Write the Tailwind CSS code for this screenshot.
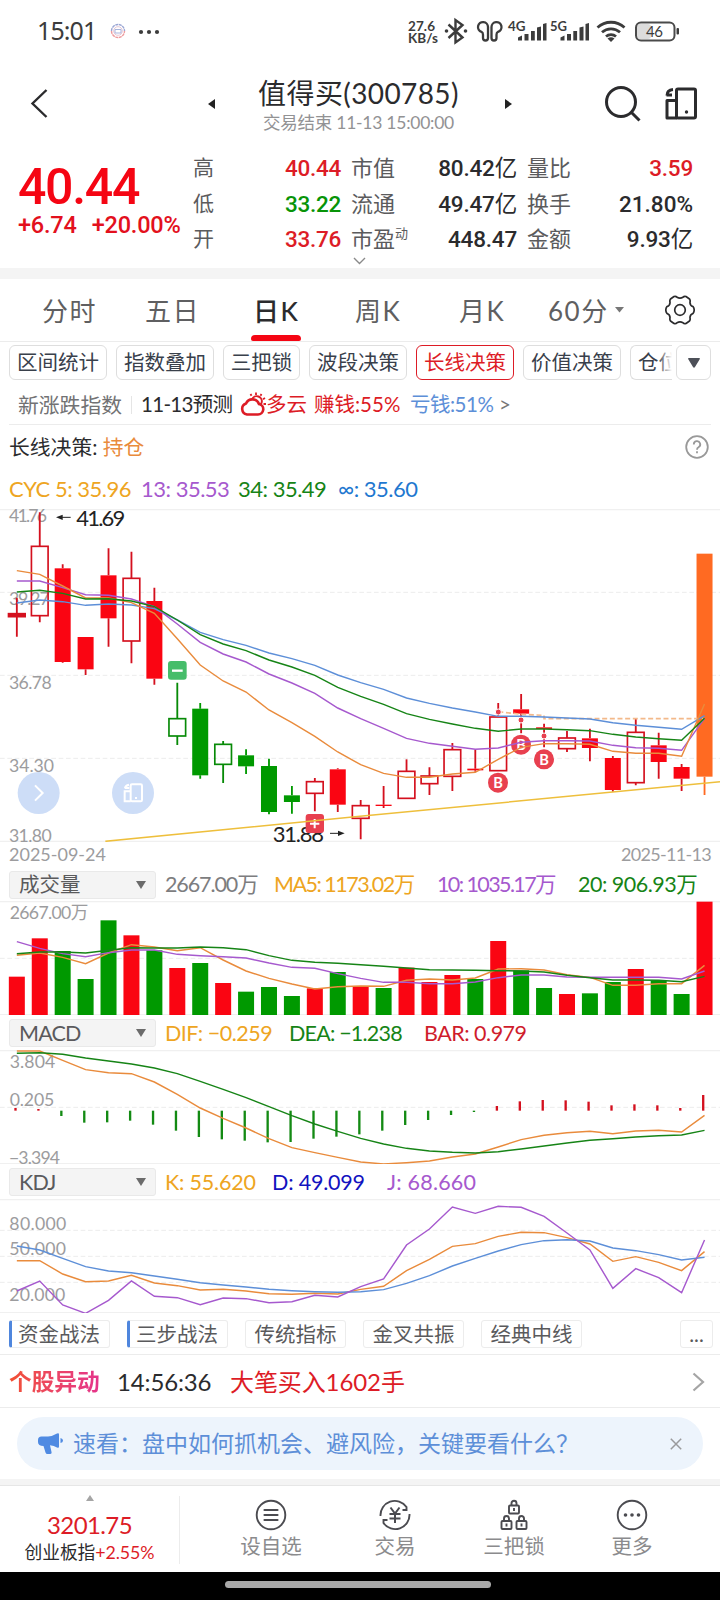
<!DOCTYPE html>
<html lang="zh-CN">
<head>
    <meta charset="UTF-8">
    <meta name="viewport" content="width=device-width, initial-scale=1.0">
    <title>值得买(300785)</title>
    <script src="https://cdn.jsdelivr.net/npm/@tailwindcss/browser@4"></script>
    <style>
        body { font-family: Lato, "Noto Sans CJK SC", sans-serif; font-weight: 400; }
        .num { font-family: Roboto, "Noto Sans CJK SC", sans-serif; }
    </style>
</head>
<body class="w-[720px] h-[1600px] overflow-hidden bg-white text-[#2b2b2d] whitespace-nowrap">

    <!-- Status bar -->
    <div class="flex items-center h-[62px] pl-[37px]">
        <span class="text-[25px] text-[#3c3c3c] tracking-[-0.900px] w-[73px] font-['Noto_Sans']">15:01</span>
        <svg class="w-4 h-4" viewBox="0 0 16 16" fill="none" stroke-width="1.4">
            <path d="M1.5 8a6.500 6.500 0 0 1 13 0" stroke="#9aa5d3" stroke-dasharray="3 .6"/>
            <path d="M1.500 8a6.500 6.500 0 0 0 13 0" stroke="#ee9a9d" stroke-dasharray="3 .6"/>
            <circle cx="8" cy="8" r="4.300" stroke="#e6c5d3" stroke-width="1"/>
            <path d="M5 6.500h6v3.500H5z" stroke="#a7b4dd" stroke-width="1"/>
        </svg>
        <svg class="ml-[12px] mt-[2px] w-[22px] h-[6px]" viewBox="0 0 22 6" fill="#3c3c3c">
            <circle cx="3" cy="3" r="2.100"/><circle cx="11" cy="3" r="2.100"/><circle cx="19" cy="3" r="2.100"/>
        </svg>
        <svg class="ml-[240px] w-[290px] h-[62px]" viewBox="400 0 290 62" fill="#3c3c3c">
            <g font-weight="700" font-family="Lato">
                <text x="408" y="30.500" font-size="13.500" textLength="27">27.6</text>
                <text x="408" y="42.500" font-size="13.500" textLength="30">KB/s</text>
                <text x="508" y="30.500" font-size="13.500" textLength="17.500" lengthAdjust="spacingAndGlyphs">4G</text>
                <text x="550" y="30.500" font-size="13.500" textLength="17" lengthAdjust="spacingAndGlyphs">5G</text>
            </g>
            <path d="M448.500 24.500l14 13-7 5V20l7 5-14 13" fill="none" stroke="#3c3c3c" stroke-width="2.400"/>
            <circle cx="446.500" cy="31" r="1.800"/><circle cx="465.500" cy="31" r="1.800"/>
            <g fill="none" stroke="#3c3c3c" stroke-width="2.300">
                <path d="M488 38V27a5 5 0 1 0-6.500 4.800c1.500.6 1.500 1.700 1.500 3V38a2.500 2.500 0 0 0 5 0z"/>
                <path d="M491.500 38V27a5 5 0 1 1 6.500 4.800c-1.500.6-1.500 1.700-1.500 3V38a2.500 2.500 0 0 1-5 0z"/>
            </g>
            <path d="M518 37.500l4-2v5h-4zM524.500 34h4v6.500h-4zM531 31h3.800v9.500H531zM537 27.500l4-1v14h-4zM543 24l3.500-1v17.500H543z"/>
            <path d="M560.500 37.500l4-2v5h-4zM567 34h4v6.500h-4zM573.300 31h3.800v9.500h-3.800zM579.500 27.500l4-1v14h-4zM585.500 24l3.500-1v17.500h-3.500z"/>
            <g fill="none" stroke="#3c3c3c" stroke-width="2.800">
                <path d="M597.500 27.500a20 20 0 0 1 27 0M602 32.300a13.500 13.500 0 0 1 18 0M606 36.500a7.600 7.600 0 0 1 10 0"/>
            </g>
            <path d="M607.500 38.500q3.500-2.500 7 0l-3.500 3.500z"/>
            <rect x="637" y="24" width="14" height="15" rx="3" fill="#dcdcdc"/>
            <rect x="636" y="22.500" width="38.500" height="18" rx="5" fill="none" stroke="#4a4a4a" stroke-width="2"/>
            <rect x="676.500" y="28" width="2.500" height="6.500" rx="1"/>
            <text x="646" y="37" font-size="15" textLength="17" font-family="Lato">46</text>
        </svg>
    </div>

    <!-- Title -->
    <header class="flex items-center h-[88px]">
        <svg class="ml-[30px] -mt-[6px] w-[20px] h-[32px]" viewBox="0 0 20 32" fill="none" stroke="#2b2b2d" stroke-width="2.400"><path d="M16.500 3L2.500 16.500 16.500 30"/></svg>
        <svg class="ml-[157px] -mt-[5px] w-[8px] h-[10px]" viewBox="0 0 8 10" fill="#222"><path d="M8 0v10L1 5z"/></svg>
        <div class="ml-[28px] w-[231px] -mt-[3px] flex flex-col items-center">
            <div class="text-[28px] leading-[36px] tracking-[0.400px]">值得买(300785)</div>
            <div class="text-[17.500px] leading-[24px] tracking-[-0.250px] text-[#929294]">交易结束 11-13 15:00:00</div>
        </div>
        <svg class="ml-[31px] -mt-[5px] w-[8px] h-[10px]" viewBox="0 0 8 10" fill="#222"><path d="M0 0v10l7-5z"/></svg>
        <svg class="ml-[91px] -mt-[5px] w-[38px] h-[38px]" viewBox="0 0 38 38" fill="none" stroke="#2b2b2d" stroke-width="3"><circle cx="17" cy="17" r="14.500"/><path d="M27 27l8.500 8.500"/></svg>
        <svg class="ml-[22px] -mt-[6px] w-[34px] h-[34px]" viewBox="0 0 34 34" fill="none" stroke="#2b2b2d" stroke-width="3" stroke-linejoin="round">
            <rect x="12.500" y="3" width="19" height="29" rx="1.500"/><path d="M12 14.500H3V32h10M2.500 9h5.500M3 9.500q0-5.500 6-6"/><circle cx="22.500" cy="26" r="1.700" fill="#2b2b2d" stroke="none"/>
        </svg>
    </header>

    <!-- Quote -->
    <section class="num flex h-[118px] pt-[1px] border-b-[11px] border-[#f4f4f4] box-content -mt-px">
        <div class="w-[193px] pl-[18px] pt-[10px] text-[#e3101d]">
            <div class="text-[50px] font-medium leading-[54px] tracking-[-1.300px] text-[#f50513]">40.44</div>
            <div class="flex gap-[15px] text-[23.500px] font-medium leading-[22px] tracking-[-0.200px]"><span>+6.74</span><span>+20.00%</span></div>
        </div>
        <div class="w-[148px] pt-px text-[22.500px] leading-[35.500px]">
            <div class="flex justify-between"><span class="text-[#5b5b5d] text-[21px]">高</span><span class="font-medium tracking-[-0.300px] text-[#dd1c26]">40.44</span></div>
            <div class="flex justify-between"><span class="text-[#5b5b5d] text-[21px]">低</span><span class="font-medium tracking-[-0.300px] text-[#089408]">33.22</span></div>
            <div class="flex justify-between"><span class="text-[#5b5b5d] text-[21px]">开</span><span class="font-medium tracking-[-0.300px] text-[#dd1c26]">33.76</span></div>
        </div>
        <div class="ml-[10px] w-[166px] pt-px text-[22.500px] leading-[35.500px]">
            <div class="flex justify-between"><span class="text-[#5b5b5d] text-[22px]">市值</span><span class="tracking-[-0.200px]"><span class="font-medium">80.42</span>亿</span></div>
            <div class="flex justify-between"><span class="text-[#5b5b5d] text-[22px]">流通</span><span class="tracking-[-0.200px]"><span class="font-medium">49.47</span>亿</span></div>
            <div class="flex justify-between"><span class="text-[#5b5b5d] text-[22px]">市盈<sup class="text-[13px] -top-[9px]">动</sup></span><span class="font-medium tracking-[-0.200px]">448.47</span></div>
            <svg class="-mt-[1px] ml-[2px] w-[13px] h-[8px]" viewBox="0 0 13 8" fill="none" stroke="#8a8a8a" stroke-width="1.400"><path d="M1 1l5.500 5.500L12 1"/></svg>
        </div>
        <div class="ml-[10px] w-[166px] pt-px text-[22.500px] leading-[35.500px]">
            <div class="flex justify-between"><span class="text-[#5b5b5d] text-[22px]">量比</span><span class="font-medium tracking-[-0.200px] text-[#dd1c26]">3.59</span></div>
            <div class="flex justify-between"><span class="text-[#5b5b5d] text-[22px]">换手</span><span class="font-medium">21.80%</span></div>
            <div class="flex justify-between"><span class="text-[#5b5b5d] text-[22px]">金额</span><span class="tracking-[-0.200px]"><span class="font-medium">9.93</span>亿</span></div>
        </div>
    </section>

    <!-- Period tabs -->
    <nav class="flex h-[63px] pl-[42px] text-[26px] leading-[64px] tracking-[1.500px] text-[#5f5f61] border-b border-[#ececec]">
        <span class="w-[103px]">分时</span>
        <span class="w-[106px]">五日</span>
        <span class="relative w-[104px] pl-[2px] font-medium text-[#2b2b2d]">日K<i class="absolute left-0 bottom-0 w-[50px] h-[6px] rounded-t-[4px] rounded-b-[2px] bg-[#f50513]"></i></span>
        <span class="w-[104px]">周K</span>
        <span class="w-[89px]">月K</span>
        <span class="w-[67px]">60分</span>
        <svg class="mt-[28px] w-[9px] h-[6px]" viewBox="0 0 9 6" fill="#777"><path d="M0 0h9L4.500 5.500z"/></svg>
        <svg class="ml-[41px] mt-[16px] w-[30px] h-[30px]" viewBox="0 0 30 30" fill="none" stroke="#2b2b2d" stroke-width="1.700" stroke-linejoin="round">
            <path d="M9 1.500Q11 1 12 2.300 15 4 18 2.300 19 1 21 1.500L24.500 4Q25.500 5.500 25 7 24.800 10.500 28 11.500 29.200 13 29.200 15 29.200 17 28 18.500 24.800 19.500 25 23 25.500 24.500 24.500 26L21 28.500Q19 29 18 27.700 15 26 12 27.700 11 29 9 28.500L5.500 26Q4.500 24.500 5 23 5.200 19.500 2 18.500.8 17 .8 15 .8 13 2 11.500 5.200 10.500 5 7 4.500 5.500 5.500 4z"/>
            <circle cx="15" cy="15" r="5.300"/>
        </svg>
    </nav>

    <!-- Strategy chips -->
    <div class="flex h-[43px] pt-[3px] pl-[9px] text-[20.500px] text-[#39404b] leading-[33px] text-center">
        <span class="w-[98px] h-[35px] mr-[9px] border border-[#dedede] rounded-[6px]">区间统计</span>
        <span class="w-[98px] h-[35px] mr-[9px] border border-[#dedede] rounded-[6px]">指数叠加</span>
        <span class="w-[77px] h-[35px] mr-[9px] border border-[#dedede] rounded-[6px]">三把锁</span>
        <span class="w-[98px] h-[35px] mr-[9px] border border-[#dedede] rounded-[6px]">波段决策</span>
        <span class="w-[98px] h-[35px] mr-[9px] border-[1.500px] border-[#dd1c26] rounded-[6px] text-[#dd1c26]">长线决策</span>
        <span class="w-[98px] h-[35px] mr-[9px] border border-[#dedede] rounded-[6px]">价值决策</span>
        <span class="relative w-[42px] h-[35px] mr-[4px] pl-[7px] border border-r-0 border-[#dedede] rounded-l-[6px] overflow-hidden text-left">仓位<i class="absolute right-0 -top-px w-[14px] h-[35px] bg-linear-to-r from-white/0 to-white"></i></span>
        <span class="flex items-center justify-center w-[35px] h-[35px] border border-[#dedede] rounded-[6px]">
            <svg class="w-[12px] h-[10px]" viewBox="0 0 12 10" fill="#4d5058"><path d="M1 0h10q1.500 0 .7 1.300L7 9q-1 1.500-2 0L.3 1.300Q-.5 0 1 0z"/></svg>
        </span>
    </div>

    <!-- Sentiment forecast -->
    <div class="flex items-center mx-[9px] h-[40px] pl-[9px] text-[20.500px] border-b border-[#ececec]">
        <span class="w-[113px] text-[20.800px] text-[#727274]">新涨跌指数</span>
        <i class="w-px h-[18px] bg-[#e5e5e5]"></i>
        <span class="ml-[9px] w-[99px] tracking-[-0.700px]">11-13预测</span>
        <svg class="-mt-[2px] w-[26px] h-[24px]" viewBox="0 0 26 24" fill="none" stroke="#dd1c26" stroke-width="2.600">
            <path d="M7 22.500h11a5.300 5.300 0 0 0 1-10.500 7 7 0 0 0-13-.5A5.700 5.700 0 0 0 7 22.500z"/>
            <path d="M12 7.500a5 5 0 0 1 9.500 3.500l-1.500 2" stroke-width="2"/>
            <path d="M16 .5V3M10.500 2l1 1.800M21.500 2l-1 1.800M25 6l-2 1.200M26 12h-2.500" stroke-width="1.800"/>
        </svg>
        <span class="w-[48px] text-[#dd1c26]">多云</span>
        <span class="w-[96px] text-[#dd1c26]">赚钱:55%</span>
        <span class="w-[89px] tracking-[-0.500px] text-[#5d8fd8]">亏钱:51%</span>
        <span class="text-[#777]">&gt;</span>
    </div>

    <div class="flex items-center justify-between h-[42px] pt-px pl-[9px] pr-[11px] text-[20.800px]">
        <span>长线决策: <span class="text-[#e98b3c]">持仓</span></span>
        <svg class="w-[24px] h-[24px]" viewBox="0 0 24 24" fill="none" stroke="#999" stroke-width="1.800"><circle cx="12" cy="12" r="10.800"/><path d="M8.800 9.500a3.200 3.200 0 1 1 4.700 2.700q-1.500.8-1.500 2.500M12 16.300v2"/></svg>
    </div>

    <div class="flex items-center h-[42px] pl-[9px] text-[22px] tracking-[-0.500px]">
        <span class="w-[132px] text-[#eea522]">CYC 5: 35.96</span>
        <span class="w-[97px] text-[#a659ce]">13: 35.53</span>
        <span class="w-[100px] text-[#168416]">34: 35.49</span>
        <span class="text-[#1f78d0]">∞: 35.60</span>
    </div>

    <!-- K line -->
    <svg id="kline" class="block w-[720px] h-[333px]" viewBox="0 27 2160 999" font-family="Lato"></svg>
    <div class="flex justify-between h-[26px] px-[9px] text-[18px] leading-[25px] text-[#9c9c9e]"><span>2025-09-24</span><span class="tracking-[-0.700px]">2025-11-13</span></div>

    <!-- Volume -->
    <div class="flex items-center h-[33px] pl-[9px] text-[21.500px] tracking-[-0.500px]">
        <div class="flex items-center justify-between w-[147px] h-[28px] mr-[9px] pl-[9px] pr-[9px] rounded-[3px] border border-[#e9e9e9] bg-[#f4f4f4] text-[20.500px] tracking-normal text-[#5a5a5c]">成交量<svg class="w-[10px] h-[8px]" viewBox="0 0 10 8" fill="#6b6b6b"><path d="M0 0h10L5 8z"/></svg></div>
        <span class="w-[109px] tracking-[-1.100px] text-[#7d7d7f]">2667.00万</span>
        <span class="w-[163px] tracking-[-1.500px] text-[#eea522]">MA5: 1173.02万</span>
        <span class="w-[141px] tracking-[-1.600px] text-[#a659ce]">10: 1035.17万</span>
        <span class="text-[#168416]">20: 906.93万</span>
    </div>
    <svg id="volume" class="block w-[720px] h-[114px]" viewBox="0 123 2160 342" font-family="Lato, Noto Sans CJK SC"></svg>

    <!-- MACD -->
    <div class="flex items-center h-[35px] pt-px pl-[9px] text-[21.500px] tracking-[-0.500px]">
        <div class="flex items-center justify-between w-[147px] h-[28px] mr-[9px] pl-[9px] pr-[9px] rounded-[3px] border border-[#e9e9e9] bg-[#f4f4f4] text-[21.500px] tracking-[-0.800px] text-[#5a5a5c]">MACD<svg class="w-[10px] h-[8px]" viewBox="0 0 10 8" fill="#6b6b6b"><path d="M0 0h10L5 8z"/></svg></div>
        <span class="w-[124px] text-[#eea522]">DIF: −0.259</span>
        <span class="w-[135px] tracking-[-0.800px] text-[#168416]">DEA: −1.238</span>
        <span class="text-[#cf1c2c]">BAR: 0.979</span>
    </div>
    <svg id="macd" class="block w-[720px] h-[114px]" viewBox="0 570 2160 342" font-family="Lato"></svg>

    <!-- KDJ -->
    <div class="flex items-center h-[35px] pt-px pl-[9px] text-[21.500px] tracking-[-0.200px]">
        <div class="flex items-center justify-between w-[147px] h-[28px] mr-[9px] pl-[9px] pr-[9px] rounded-[3px] border border-[#e9e9e9] bg-[#f4f4f4] text-[21.500px] tracking-[-0.800px] text-[#5a5a5c]">KDJ<svg class="w-[10px] h-[8px]" viewBox="0 0 10 8" fill="#6b6b6b"><path d="M0 0h10L5 8z"/></svg></div>
        <span class="w-[107px] text-[#eea522]">K: 55.620</span>
        <span class="w-[115px] text-[#1212c0]">D: 49.099</span>
        <span class="tracking-[0.200px] text-[#a659ce]">J: 68.660</span>
    </div>
    <svg id="kdj" class="block w-[720px] h-[114px]" viewBox="0 87 2160 342" font-family="Lato"></svg>

    <!-- Tactics -->
    <div class="flex items-center gap-[17px] h-[42px] pt-px pl-[9px] pr-[7px] text-[20.500px] leading-[26px] text-center text-[#5a5a5c] border-b border-[#ececec]">
        <span class="w-[101px] h-[28px] pr-[3px] border border-[#ececec] border-l-[3px] border-l-[#4f86dd] rounded-[3px]">资金战法</span>
        <span class="w-[101px] h-[28px] pr-[3px] border border-[#ececec] border-l-[3px] border-l-[#4f86dd] rounded-[3px]">三步战法</span>
        <span class="w-[101px] h-[28px] border border-[#ececec] rounded-[3px]">传统指标</span>
        <span class="w-[101px] h-[28px] border border-[#ececec] rounded-[3px]">金叉共振</span>
        <span class="w-[101px] h-[28px] border border-[#ececec] rounded-[3px]">经典中线</span>
        <span class="ml-auto w-[33px] h-[28px] border border-[#ececec] rounded-[3px]">...</span>
    </div>

    <!-- Unusual move -->
    <div class="flex items-center h-[53px] pt-[2px] pl-[9px] pr-[15px] text-[24px] border-b border-[#ececec]">
        <span class="w-[108px] text-[22.700px] font-bold"><span class="bg-linear-to-r from-[#f2502f] to-[#e5338a] bg-clip-text text-transparent">个股异动</span></span>
        <span class="w-[113px] tracking-[-0.150px]">14:56:36</span>
        <span class="text-[24px] tracking-[-0.100px] text-[#dd1c26]">大笔买入1602手</span>
        <svg class="ml-auto w-[13px] h-[20px]" viewBox="0 0 13 20" fill="none" stroke="#a5a5a5" stroke-width="2.200"><path d="M1.500 1.500L11 10l-9.500 8.500"/></svg>
    </div>

    <!-- Tip banner -->
    <div class="h-[77px] px-[17px] pt-[9px] border-b-[6px] border-[#f4f4f4]">
        <div class="flex items-center h-[53px] pl-[20px] pr-[21px] rounded-full bg-[#edf4fc] text-[23px] text-[#5d8fd8]">
            <svg class="w-[26px] h-[21px]" viewBox="0 0 26 21" fill="#4f8ae2"><path d="M1 7q0-3.500 3.500-3.500H11Q16 3 20 .5q2-1 2 1v12q0 2-2 1-3-2-7-2.200L14.500 19q.5 2-1.500 2h-2.500q-1.500 0-2-1.500l-2-6.500Q1 13 1 9zM23.500 5q2.500.5 2.500 2.500T23.500 10z"/></svg>
            <span class="ml-[10px]">速看：盘中如何抓机会、避风险，关键要看什么？</span>
            <svg class="ml-auto w-[12px] h-[12px]" viewBox="0 0 12 12" fill="none" stroke="#9a9a9c" stroke-width="1.500"><path d="M.8.8l10.400 10.400M11.200.8L.8 11.200"/></svg>
        </div>
    </div>

    <!-- Bottom bar -->
    <footer class="flex items-center h-[87px] pt-px border-t border-[#e6e6e6] text-[20.500px] text-[#8b8b8d]">
        <div class="flex flex-col items-center w-[180px] h-[68px] border-r border-[#ececec]">
            <svg class="-mt-[1px] w-[8px] h-[6px]" viewBox="0 0 8 6" fill="#a5a5a5"><path d="M4 0l4 6H0z"/></svg>
            <div class="mt-[9px] text-[24px] leading-[30px] tracking-[-0.600px] text-[#dd1c26]">3201.75</div>
            <div class="mt-[1px] text-[17.800px] leading-[22px] tracking-[-0.100px] text-[#2b2b2d]">创业板指<span class="text-[#dd1c26]">+2.55%</span></div>
        </div>
        <div class="flex flex-col items-center ml-[31px] w-[120px]">
            <svg class="w-[32px] h-[32px]" viewBox="0 0 32 32" fill="none" stroke="#4b4b50" stroke-width="1.900"><circle cx="16" cy="16" r="14.300"/><path d="M9.500 11h13M9.500 16h13M9.500 21h13" stroke-width="2.200" stroke-linecap="round"/></svg>
            <span class="leading-[30px]">设自选</span>
        </div>
        <div class="flex flex-col items-center ml-[4px] w-[120px]">
            <svg class="w-[32px] h-[32px]" viewBox="0 0 32 32" fill="none" stroke="#4b4b50" stroke-width="1.900"><path d="M1.500 17A14.300 14.300 0 0 1 27.500 8v3h-4M30.500 15A14.300 14.300 0 0 1 4.500 24v-3h4"/><path d="M11.500 8.500l4.500 6 4.500-6M10.500 15h11M10.500 19.500h11M16 15v9" stroke-width="2"/></svg>
            <span class="leading-[30px]">交易</span>
        </div>
        <div class="flex flex-col items-center -ml-[1px] w-[120px]">
            <svg class="w-[32px] h-[32px]" viewBox="0 0 32 32" fill="none" stroke="#4b4b50" stroke-width="1.900"><rect x="11" y="6.500" width="10" height="8" rx="1"/><path d="M13.500 6.500V4.300a2.500 2.500 0 0 1 5 0v2.200M16 9v3"/><rect x="3.500" y="22" width="10" height="8" rx="1"/><path d="M6 22v-2.500a2.500 2.500 0 0 1 5 0V22M8.500 24.500v3"/><rect x="18.500" y="22" width="10" height="8" rx="1"/><path d="M21 22v-2.500a2.500 2.500 0 0 1 5 0V22M23.500 24.500v3"/></svg>
            <span class="leading-[30px]">三把锁</span>
        </div>
        <div class="flex flex-col items-center -ml-[2px] w-[120px]">
            <svg class="w-[32px] h-[32px]" viewBox="0 0 32 32" fill="none" stroke="#4b4b50" stroke-width="1.900"><circle cx="16" cy="16" r="14.300"/><g fill="#4b4b50" stroke="none"><circle cx="9.500" cy="16" r="1.800"/><circle cx="16" cy="16" r="1.800"/><circle cx="22.500" cy="16" r="1.800"/></g></svg>
            <span class="leading-[30px]">更多</span>
        </div>
    </footer>
    <div class="h-[28px] pt-[9px] bg-black"><div class="mx-auto w-[266px] h-[7px] -translate-x-[2px] rounded-full bg-[#a8a8a8]"></div></div>

    <script>
        const RED = "#fa0512", LINE_RED = "#d4101e", GREEN = "#009900", ORANGE = "#e98b3c", PURPLE = "#a659ce", DARK_GREEN = "#168416", BLUE = "#5d8fd8";
        const x = i => 50.5 + 68.77 * i;

        const rule = y => `<path d="M0 ${y}H2160" stroke="#f0f0f0" stroke-width="4"/>`;
        const dashes = y => `<path d="M0 ${y}H2160" stroke="#ececec" stroke-width="3" stroke-dasharray="14 8"/>`;
        const line = (ys, color) => `<polyline fill="none" stroke="${color}" stroke-width="4.300" points="${ys.map((y, i) => x(i) + "," + y).join(" ")}"/>`;
        const label = (t, y, w, left = 27) => `<text x="${left}" y="${y}" font-size="53" fill="#9c9c9e" textLength="${w}">${t}</text>`;

        // [high, body top, body bottom, low, kind]: r/g filled, R/G hollow, o = latest
        const candles = [
            [293,341,350,410,"R"],[37,139,347,367,"R"],[193,205,486,488,"r"],[411,411,508,525,"r"],[145,226,355,440,"r"],
            [155,235,423,490,"R"],[263,303,536,554,"r"],[548,656,708,735,"G"],[609,626,826,836,"g"],[723,733,793,849,"G"],
            [748,766,799,822,"g"],[776,798,936,943,"g"],[858,886,906,941,"g"],[834,845,880,934,"R"],[805,808,914,936,"r"],
            [900,917,955,1018,"R"],[858,914,918,924,"r"],[778,814,895,895,"R"],[802,828,851,885,"R"],[729,749,829,873,"R"],
            [749,806,811,815,"r"],[609,651,812,812,"R"],[582,628,641,700,"r"],[671,682,687,742,"r"],[693,714,746,756,"R"],
            [686,715,744,784,"r"],[768,774,870,875,"r"],[657,697,848,856,"R"],[698,736,786,836,"r"],[792,801,836,873,"r"],[161,161,830,885,"o"]
        ];

        function candle([hi, top, bot, lo, k], i) {
            const c = { r: RED, g: GREEN, o: "#ff6a22", R: LINE_RED, G: "#078a07" }[k];
            const wick = `<path d="M${x(i)} ${hi}V${top}M${x(i)} ${bot}V${lo}" stroke="${k === "r" ? LINE_RED : c}" stroke-width="5.500"/>`;
            return wick + (k === "R" || k === "G"
                ? `<rect x="${x(i) - 25}" y="${top}" width="50" height="${bot - top}" fill="${bot - top < 12 ? c : "none"}" stroke="${c}" stroke-width="5"/>`
                : `<rect x="${x(i) - 24}" y="${top}" width="48" height="${bot - top}" fill="${c}"/>`);
        }
        const buy = (cx, cy) => `<circle cx="${cx}" cy="${cy}" r="30" fill="#e8404f"/><text x="${cx}" y="${cy + 16}" font-size="44" fill="#fff" font-weight="700" text-anchor="middle">B</text>`;

        document.getElementById("kline").innerHTML =
            rule(29) + [277, 526, 775].map(dashes).join("") + rule(1024) +
            label("41.76", 67, 114) + label("39.27", 315, 122) + label("36.78", 567, 128) + label("34.30", 816, 135) + label("31.80", 1026, 128) +
            candles.map(candle).join("") +
            `<text x="229" y="78" font-size="66" fill="#222" textLength="147">41.69</text><path d="M212 52H178" stroke="#222" stroke-width="3"/><path d="M168 52l20-8v16z" fill="#222"/>` +
            `<path d="M1495 635L1564 643L1632 646V656H2110" fill="none" stroke="#f3b98a" stroke-width="5" stroke-dasharray="15 8"/>` +
            `<text x="818" y="1025" font-size="66" fill="#222" textLength="154">31.88</text><path d="M990 1000H1022" stroke="#222" stroke-width="3"/><path d="M1034 1000l-20-8v16z" fill="#222"/>` +
            `<rect x="917" y="942" width="55" height="57" rx="9" fill="#e8404f"/><path d="M930 971h28M944 957v28" stroke="#fff" stroke-width="6"/>` +
            `<path d="M316 1024L1080 949L2160 845" stroke="#eebf3c" fill="none" stroke-width="4.500"/>` +
            `<rect x="504" y="483" width="56" height="56" rx="9" fill="#46bd6a"/><path d="M516 512h32" stroke="#fff" stroke-width="7"/>` +
            buy(1494, 848) + buy(1563, 734) + buy(1632, 778) +
            `<g fill="#e8404f" stroke="#fff" stroke-width="3"><circle cx="1495" cy="636" r="9"/><circle cx="1563" cy="660" r="9"/><circle cx="1632" cy="708" r="9"/></g>` +
            line([309,300,305,316,312,315,326,360,397,419,436,459,476,496,525,548,568,594,610,624,636,649,649,651,654,657,668,676,682,688,647], BLUE) +
            line([243,243,263,284,286,297,320,372,427,462,486,522,549,580,624,656,685,715,730,739,748,744,727,722,722,723,736,743,745,751,655], PURPLE) +
            line([212,223,258,294,294,308,340,416,495,543,576,630,668,709,756,794,820,832,832,822,817,778,742,731,731,733,754,760,760,769,612], ORANGE) +
            line([276,271,280,297,296,303,320,360,404,432,452,480,501,526,562,589,613,641,658,672,685,694,687,687,689,692,703,711,716,721,655], DARK_GREEN) +
            `<circle cx="116" cy="879" r="63" fill="#cdddf7"/><path d="M105 856l23 23-23 23" fill="none" stroke="#fff" stroke-width="6"/>` +
            `<circle cx="399" cy="879" r="63" fill="#cdddf7"/><g fill="none" stroke="#fff" stroke-width="6"><rect x="392" y="853" width="34" height="51" rx="4"/><path d="M390 874h-16v30h18M374 864h14M375 864q1-8 12-10M405 894h6"/></g>`;

        // bar tops and the days drawn red
        const vol = [350,235,273,357,181,226,271,324,309,369,395,381,408,385,336,380,384,323,366,345,357,243,331,384,402,400,366,327,361,402,125];
        const redDays = [0, 1, 5, 7, 9, 13, 15, 17, 18, 19, 21, 24, 27, 30];
        document.getElementById("volume").innerHTML =
            rule(125) + dashes(295) + rule(464) + label("2667.00万", 178, 236, 29) +
            vol.map((v, i) => `<rect x="${x(i) - 24}" y="${v}" width="48" height="${466 - v}" fill="${redDays.includes(i) ? RED : GREEN}"/>`).join("") +
            line([286,279,292,311,279,254,261,272,263,300,333,355,372,387,380,378,379,361,357,360,354,327,326,330,344,352,376,376,371,371,316], ORANGE) +
            line([245,265,281,290,278,270,270,283,287,290,294,309,322,325,341,355,367,367,371,371,366,353,345,345,351,352,352,352,352,357,333], PURPLE) +
            line([281,276,276,279,271,263,264,264,261,263,269,287,301,307,310,314,319,324,329,330,331,332,333,336,346,353,360,360,361,365,349], DARK_GREEN);

        const bars = [744,747,768,788,787,782,794,812,831,838,842,847,846,836,830,823,812,795,780,765,756,738,724,720,721,725,736,733,736,744,705];
        document.getElementById("macd").innerHTML =
            rule(572) + dashes(742) + rule(911) + label("3.804", 625, 137, 29) + label("0.205", 738, 134, 29) + label("−3.394", 912, 153) +
            bars.map((b, i) => `<path d="M${x(i) - 4} 752V${b}" stroke="${b < 752 ? LINE_RED : "#138a13"}" stroke-width="7"/>`).join("") +
            line([573,573,601,629,638,641,666,703,744,775,804,836,863,878,892,906,912,908,903,891,882,861,839,826,818,814,821,813,811,816,766], ORANGE) +
            line([580,578,583,594,603,612,624,641,664,688,713,740,767,792,814,835,852,865,873,877,879,875,867,858,849,841,836,831,827,825,811], DARK_GREEN);

        document.getElementById("kdj").innerHTML =
            rule(89) + [181, 259, 337].map(dashes).join("") + rule(428) +
            label("80.000", 181, 171, 28) + label("50.000", 255, 170, 28) + label("20.000", 392, 168, 28) +
            line([272,272,312,335,333,316,339,347,360,358,363,371,373,370,372,358,349,302,268,229,221,199,187,188,203,222,274,260,277,302,245], ORANGE) +
            line([228,240,265,290,303,308,318,328,338,345,351,358,362,365,367,365,359,340,317,288,265,243,224,212,209,213,234,242,254,270,262], BLUE) +
            line([363,333,405,430,391,333,379,383,404,384,386,398,395,376,381,350,327,225,177,111,130,109,112,139,189,240,355,296,323,368,210], PURPLE);
    </script>

</body>
</html>
